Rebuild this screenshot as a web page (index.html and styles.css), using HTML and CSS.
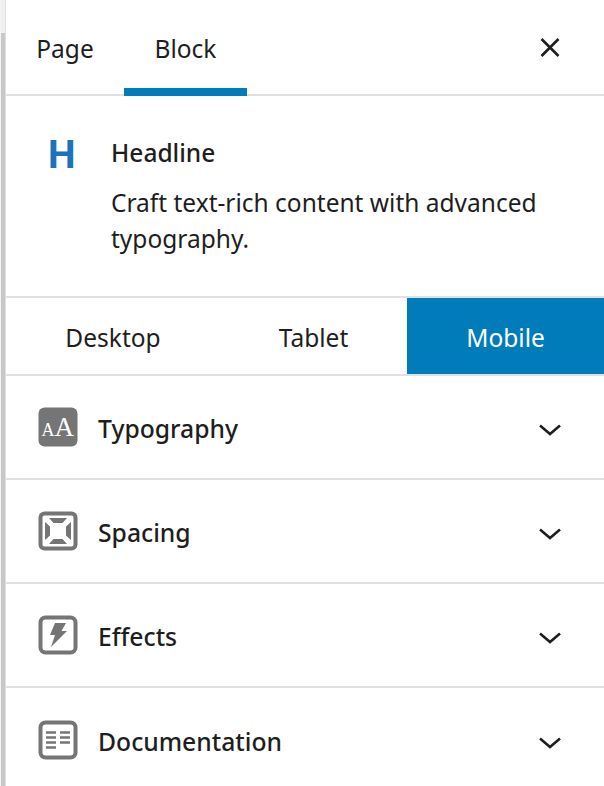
FILE: index.html
```html
<!DOCTYPE html>
<html lang="en">
<head>
  <meta charset="UTF-8" />
  <title>Block settings</title>
  <link rel="stylesheet" href="styles.css">
</head>
<body>
  <div class="page-edge"></div>
  <aside class="sidebar">
    <header class="tabs">
      <button class="tab">Page</button>
      <button class="tab active">Block</button>
      <button class="close" aria-label="Close">
        <svg width="24" height="24" viewBox="0 0 24 24"><path d="M3.5 3 L20.5 20 M20.5 3 L3.5 20" fill="none" stroke="#1e1e1e" stroke-width="2.6"/></svg>
      </button>
    </header>

    <section class="block-info">
      <span class="block-icon">H</span>
      <div>
        <h2>Headline</h2>
        <p>Craft text-rich content with advanced typography.</p>
      </div>
    </section>

    <nav class="devices">
      <button class="device desktop">Desktop</button>
      <button class="device tablet">Tablet</button>
      <button class="device active">Mobile</button>
    </nav>

    <div class="panel">
      <svg class="panel-icon" width="40" height="40" viewBox="0 0 40 40">
        <rect x="0.5" y="0.5" width="39" height="39" rx="6" fill="#757575"/>
        <text x="3.5" y="29" class="icon-letters"><tspan class="icon-a-small">A</tspan><tspan class="icon-a-big">A</tspan></text>
      </svg>
      <span>Typography</span>
      <svg class="chevron" width="24" height="14" viewBox="0 0 24 14"><path d="M2 2.5 L12 11 L22 2.5" fill="none" stroke="#1e1e1e" stroke-width="2.6"/></svg>
    </div>

    <div class="panel">
      <svg class="panel-icon" width="40" height="40" viewBox="0 0 40 40">
        <rect x="0.5" y="0.5" width="39" height="39" rx="6" fill="#757575"/>
        <rect x="4.5" y="4.5" width="31" height="31" rx="2" fill="#fff"/>
        <path d="M11 7 H29 L24.5 12 H15.5 Z M11 33 H29 L24.5 28 H15.5 Z M7 11 V29 L12 24.5 V15.5 Z M33 11 V29 L28 24.5 V15.5 Z" fill="#757575"/>
      </svg>
      <span>Spacing</span>
      <svg class="chevron" width="24" height="14" viewBox="0 0 24 14"><path d="M2 2.5 L12 11 L22 2.5" fill="none" stroke="#1e1e1e" stroke-width="2.6"/></svg>
    </div>

    <div class="panel">
      <svg class="panel-icon" width="40" height="40" viewBox="0 0 40 40">
        <rect x="2.5" y="2.5" width="35" height="35" rx="5" fill="#fff" stroke="#757575" stroke-width="4"/>
        <path d="M17 8 H28 L23.5 16 H29 L13 32 L17 20 H12 Z" fill="#757575"/>
      </svg>
      <span>Effects</span>
      <svg class="chevron" width="24" height="14" viewBox="0 0 24 14"><path d="M2 2.5 L12 11 L22 2.5" fill="none" stroke="#1e1e1e" stroke-width="2.6"/></svg>
    </div>

    <div class="panel">
      <svg class="panel-icon" width="40" height="40" viewBox="0 0 40 40">
        <rect x="2.5" y="2.5" width="35" height="35" rx="5" fill="#fff" stroke="#757575" stroke-width="4"/>
        <path d="M8 12.5 H18 M8 17.5 H18 M8 22.5 H18 M8 27.5 H18 M22 12.5 H32 M22 17.5 H32 M22 22.5 H32" fill="none" stroke="#757575" stroke-width="2.4"/>
      </svg>
      <span>Documentation</span>
      <svg class="chevron" width="24" height="14" viewBox="0 0 24 14"><path d="M2 2.5 L12 11 L22 2.5" fill="none" stroke="#1e1e1e" stroke-width="2.6"/></svg>
    </div>
  </aside>
</body>
</html>
```

FILE: styles.css
```css
* {
  box-sizing: border-box;
  margin: 0;
  padding: 0;
}

html,
body {
  height: 786px;
  overflow: hidden;
}

body {
  display: flex;
  background: #fff;
  color: #1e1e1e;
  font-family: "Noto Sans", "Open Sans", sans-serif;
}

button {
  background: none;
  border: none;
  color: inherit;
  font: inherit;
}

.page-edge {
  width: 5px;
  background: linear-gradient(to bottom, #f0f0f0 33px, #c8c8c8 33px);
  border-left: 1px solid #f4f4f4;
}

.sidebar {
  flex: 1;
  min-width: 0;
  border-left: 1px solid #e0e0e0;
}

/* Page / Block tabs */
.tabs {
  display: flex;
  align-items: stretch;
  height: 96px;
  padding-left: 6px;
  padding-right: 42px;
  border-bottom: 2px solid #e0e0e0;
}

.tab {
  font-size: 24.5px;
  width: 82px;
  margin-left: 12px;
  height: 96px;
}

.tab.active {
  width: 123px;
  margin-left: 18px;
  padding-top: 8px;
  border-bottom: 8px solid #007cba;
}

.close {
  display: flex;
  margin-left: auto;
  padding-top: 36px;
}

/* Block description */
.block-info {
  display: flex;
  height: 202px;
  padding: 43px 40px 0 42px;
  border-bottom: 2px solid #e0e0e0;
}

.block-icon {
  flex: none;
  width: 63px;
  font-family: Roboto, sans-serif;
  font-size: 39px;
  font-weight: 700;
  line-height: 32px;
  color: #1e72bd;
}

.block-info h2 {
  font-size: 24.5px;
  font-weight: 500;
  line-height: 27px;
  margin-bottom: 19px;
}

.block-info p {
  font-size: 24.5px;
  line-height: 36px;
}

/* Device switcher */
.devices {
  display: flex;
  height: 78px;
  border-bottom: 2px solid #e0e0e0;
}

.device {
  font-size: 24.5px;
  padding-top: 2px;
}

.device.desktop {
  width: 214px;
}

.device.tablet {
  width: 187px;
}

.device.active {
  flex: 1;
  background: #007cba;
  color: #fff;
}

/* Collapsed panels */
.panel {
  display: flex;
  align-items: center;
  height: 104px;
  padding: 0 42px 0 32px;
  border-bottom: 2px solid #e0e0e0;
}

.panel:last-child {
  border-bottom: none;
}

.panel span {
  font-size: 24.7px;
  font-weight: 500;
  margin-left: 20px;
  padding-top: 3px;
}

.chevron {
  margin-left: auto;
  margin-top: 6px;
}

.icon-letters {
  fill: #fff;
  font-family: "Liberation Serif", serif;
}

.icon-a-small {
  font-size: 18px;
}

.icon-a-big {
  font-size: 27px;
}
```
